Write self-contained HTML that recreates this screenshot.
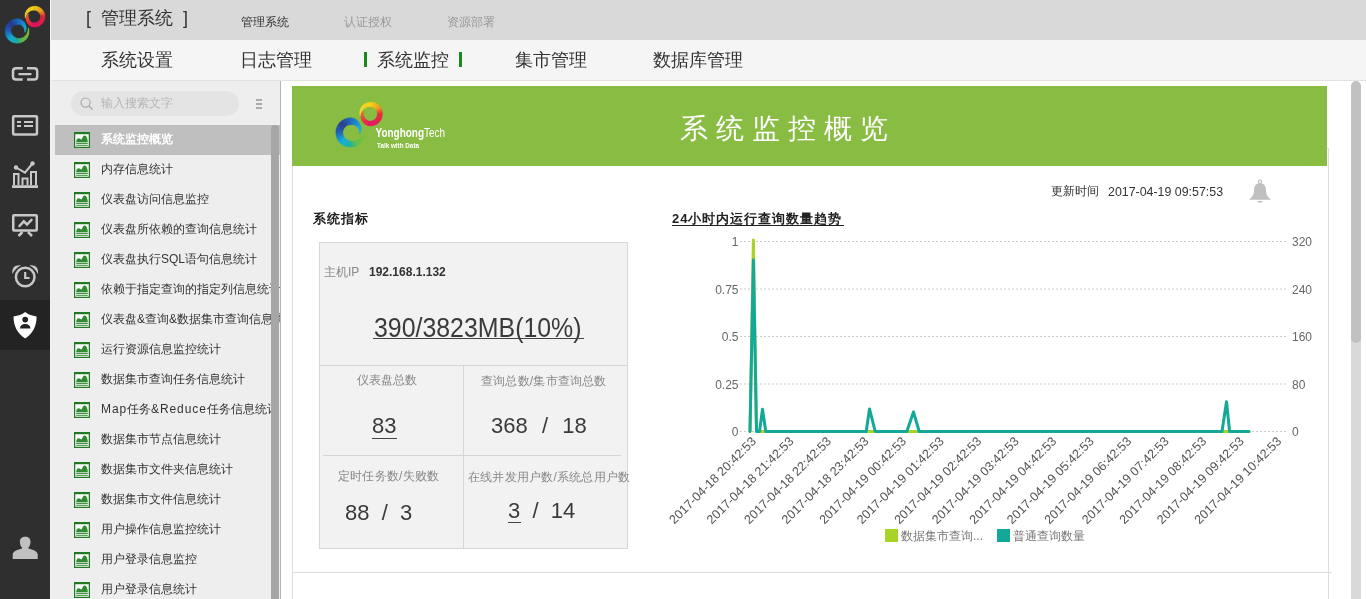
<!DOCTYPE html>
<html><head><meta charset="utf-8">
<style>
*{margin:0;padding:0;box-sizing:border-box}
html,body{width:1366px;height:599px;overflow:hidden;background:#fff;font-family:"Liberation Sans",sans-serif;color:#333}
.a{position:absolute;white-space:nowrap;line-height:1}
.b{position:absolute}
#side{position:absolute;left:0;top:0;width:50px;height:599px;background:#2f2f2f}
#sideline{position:absolute;left:50px;top:0;width:1px;height:599px;background:#f2f2f2}
#hdr{position:absolute;left:51px;top:0;width:1315px;height:40px;background:#d9d9d9}
#nav{position:absolute;left:51px;top:40px;width:1315px;height:41px;background:#f5f5f5;border-bottom:1px solid #e2e2e2}
#tree{position:absolute;left:51px;top:81px;width:229px;height:518px;background:#eeeeee;overflow:hidden}
#treeborder{position:absolute;left:280px;top:81px;width:1px;height:518px;background:#b4b4b4}
.row{position:absolute;left:4px;width:225px;height:30px;overflow:hidden}
.row.sel{background:#bfbfbf}
.row .t{position:absolute;left:46px;top:8px;font-size:12px;line-height:12px;color:#333;white-space:nowrap}
.row.sel .t{color:#fff;font-weight:bold}
.row svg{position:absolute;left:19px;top:7px}
#search{position:absolute;left:20px;top:10px;width:168px;height:25px;border-radius:13px;background:#e4e4e4}
.lbl{font-size:12px;color:#888}
.big{color:#3a3a3a}
svg text{font-family:"Liberation Sans",sans-serif}
#wrap{position:absolute;left:0;top:0;width:1366px;height:599px;will-change:transform}
</style></head><body><div id="wrap">
<svg width="0" height="0" style="position:absolute">
<defs>
<g id="ic">
<rect x="0.6" y="0.6" width="14.8" height="14.8" fill="#fafafa" stroke="#1f7a22" stroke-width="1.3"/>
<rect x="0" y="0" width="16" height="2.2" fill="#1f7a22"/>
<path d="M2.2,10.2 C2.2,7.5 3.5,6.2 4.6,6.2 C5.8,6.2 6.3,7.4 7.3,7.4 C8.4,7.4 8.6,3.6 10.5,3.6 C12.3,3.6 13.8,6.5 13.8,10.2 Z" fill="#2f8a32"/>
<rect x="2.2" y="10.9" width="11.6" height="0.9" fill="#1f7a22"/>
<rect x="2.2" y="12.8" width="11.6" height="0.9" fill="#1f7a22"/>
</g>
<g id="logo">
<path fill-rule="evenodd" fill="url(#gb)" d="M30,31 A12.5,12.5 0 1 1 5,31 A12.5,12.5 0 1 1 30,31 Z M25.6,30.4 A7.4,7.4 0 1 0 10.8,30.4 A7.4,7.4 0 1 0 25.6,30.4 Z"/>
<path fill-rule="evenodd" fill="url(#gr)" d="M45.1,16.6 A10.7,10.7 0 1 1 23.7,16.6 A10.7,10.7 0 1 1 45.1,16.6 Z M40.9,16.9 A6.3,6.3 0 1 0 28.3,16.9 A6.3,6.3 0 1 0 40.9,16.9 Z"/>
</g>
<linearGradient id="gb" x1="0" y1="0" x2="1" y2="1">
<stop offset="0" stop-color="#1b3f9a"/><stop offset="0.45" stop-color="#1aa8e0"/><stop offset="0.75" stop-color="#2fb8a0"/><stop offset="1" stop-color="#8cc63f"/>
</linearGradient>
<linearGradient id="gr" x1="0" y1="0" x2="0.6" y2="1">
<stop offset="0" stop-color="#ffd800"/><stop offset="0.5" stop-color="#f58a25"/><stop offset="1" stop-color="#e8104f"/>
</linearGradient>
</defs>
</svg>

<div id="side"></div>
<div id="sideline"></div>
<div id="hdr"></div>
<div id="nav"></div>
<div id="tree">
  <div id="search"></div>
  <svg class="b" style="left:29px;top:16px" width="14" height="14" viewBox="0 0 14 14"><circle cx="5.6" cy="5.6" r="4.6" fill="none" stroke="#aaa" stroke-width="1.2"/><path d="M8.9,8.9 L12.5,12.5" stroke="#aaa" stroke-width="1.4"/></svg>
  <div class="a" style="left:50px;top:16px;font-size:12px;color:#b5b5b5">输入搜索文字</div>
  <div class="b" style="left:205px;top:18px;width:6px;height:1.6px;background:#aaa"></div>
  <div class="b" style="left:205px;top:22px;width:6px;height:1.6px;background:#aaa"></div>
  <div class="b" style="left:205px;top:26px;width:6px;height:1.6px;background:#aaa"></div>
<div class="row sel" style="top:44px"><svg width="16" height="16" viewBox="0 0 16 16"><use href="#ic"/></svg><span class="t">系统监控概览</span></div>
<div class="row" style="top:74px"><svg width="16" height="16" viewBox="0 0 16 16"><use href="#ic"/></svg><span class="t">内存信息统计</span></div>
<div class="row" style="top:104px"><svg width="16" height="16" viewBox="0 0 16 16"><use href="#ic"/></svg><span class="t">仪表盘访问信息监控</span></div>
<div class="row" style="top:134px"><svg width="16" height="16" viewBox="0 0 16 16"><use href="#ic"/></svg><span class="t">仪表盘所依赖的查询信息统计</span></div>
<div class="row" style="top:164px"><svg width="16" height="16" viewBox="0 0 16 16"><use href="#ic"/></svg><span class="t">仪表盘执行SQL语句信息统计</span></div>
<div class="row" style="top:194px"><svg width="16" height="16" viewBox="0 0 16 16"><use href="#ic"/></svg><span class="t">依赖于指定查询的指定列信息统计</span></div>
<div class="row" style="top:224px"><svg width="16" height="16" viewBox="0 0 16 16"><use href="#ic"/></svg><span class="t">仪表盘&amp;查询&amp;数据集市查询信息统计</span></div>
<div class="row" style="top:254px"><svg width="16" height="16" viewBox="0 0 16 16"><use href="#ic"/></svg><span class="t">运行资源信息监控统计</span></div>
<div class="row" style="top:284px"><svg width="16" height="16" viewBox="0 0 16 16"><use href="#ic"/></svg><span class="t">数据集市查询任务信息统计</span></div>
<div class="row" style="top:314px"><svg width="16" height="16" viewBox="0 0 16 16"><use href="#ic"/></svg><span class="t"><span style="letter-spacing:0.9px">Map</span>任务<span style="letter-spacing:0.9px">&amp;Reduce</span>任务信息统计</span></div>
<div class="row" style="top:344px"><svg width="16" height="16" viewBox="0 0 16 16"><use href="#ic"/></svg><span class="t">数据集市节点信息统计</span></div>
<div class="row" style="top:374px"><svg width="16" height="16" viewBox="0 0 16 16"><use href="#ic"/></svg><span class="t">数据集市文件夹信息统计</span></div>
<div class="row" style="top:404px"><svg width="16" height="16" viewBox="0 0 16 16"><use href="#ic"/></svg><span class="t">数据集市文件信息统计</span></div>
<div class="row" style="top:434px"><svg width="16" height="16" viewBox="0 0 16 16"><use href="#ic"/></svg><span class="t">用户操作信息监控统计</span></div>
<div class="row" style="top:464px"><svg width="16" height="16" viewBox="0 0 16 16"><use href="#ic"/></svg><span class="t">用户登录信息监控</span></div>
<div class="row" style="top:494px"><svg width="16" height="16" viewBox="0 0 16 16"><use href="#ic"/></svg><span class="t">用户登录信息统计</span></div>
  <div class="b" style="left:220px;top:44px;width:8px;height:480px;background:#a6a6a6;border-radius:4px 4px 0 0"></div>
</div>
<div id="treeborder"></div>

<!-- sidebar icons -->
<svg class="b" style="left:0;top:0" width="50" height="599" viewBox="0 0 50 599">
<path d="M25.09,32.34L25.67,31.17L24.75,31.16L24.68,32.27Z" fill="#2db7b6" stroke="#2db7b6" stroke-width="0.35"/><path d="M25.67,31.17L26.06,29.87L24.64,30.05L24.75,31.16Z" fill="#26b5c2" stroke="#26b5c2" stroke-width="0.35"/><path d="M26.06,29.87L26.22,28.45L24.37,28.99L24.64,30.05Z" fill="#1fb3cf" stroke="#1fb3cf" stroke-width="0.35"/><path d="M26.22,28.45L26.15,26.95L23.94,27.98L24.37,28.99Z" fill="#18b2db" stroke="#18b2db" stroke-width="0.35"/><path d="M26.15,26.95L25.81,25.42L23.37,27.06L23.94,27.98Z" fill="#12afe6" stroke="#12afe6" stroke-width="0.35"/><path d="M25.81,25.42L25.21,23.91L22.67,26.24L23.37,27.06Z" fill="#13a5e1" stroke="#13a5e1" stroke-width="0.35"/><path d="M25.21,23.91L24.32,22.46L21.86,25.54L22.67,26.24Z" fill="#149bdc" stroke="#149bdc" stroke-width="0.35"/><path d="M24.32,22.46L23.16,21.13L20.96,24.96L21.86,25.54Z" fill="#1690d7" stroke="#1690d7" stroke-width="0.35"/><path d="M23.16,21.13L21.73,20.01L19.98,24.57L20.96,24.96Z" fill="#1786d2" stroke="#1786d2" stroke-width="0.35"/><path d="M21.73,20.01L20.06,19.25L18.92,24.49L19.98,24.57Z" fill="#187ccd" stroke="#187ccd" stroke-width="0.35"/><path d="M20.06,19.25L18.25,18.75L17.89,24.57L18.92,24.49Z" fill="#1972c9" stroke="#1972c9" stroke-width="0.35"/><path d="M18.25,18.75L16.37,18.77L16.91,24.57L17.89,24.57Z" fill="#1a67c3" stroke="#1a67c3" stroke-width="0.35"/><path d="M16.37,18.77L14.52,19.07L15.93,24.73L16.91,24.57Z" fill="#1d5eba" stroke="#1d5eba" stroke-width="0.35"/><path d="M14.52,19.07L12.73,19.65L14.99,25.03L15.93,24.73Z" fill="#2055b0" stroke="#2055b0" stroke-width="0.35"/><path d="M12.73,19.65L11.05,20.51L14.10,25.47L14.99,25.03Z" fill="#224ca6" stroke="#224ca6" stroke-width="0.35"/><path d="M11.05,20.51L9.51,21.60L13.29,26.05L14.10,25.47Z" fill="#25439c" stroke="#25439c" stroke-width="0.35"/><path d="M9.51,21.60L8.17,22.92L12.58,26.74L13.29,26.05Z" fill="#283a92" stroke="#283a92" stroke-width="0.35"/><path d="M8.17,22.92L7.03,24.44L11.98,27.54L12.58,26.74Z" fill="#26419a" stroke="#26419a" stroke-width="0.35"/><path d="M7.03,24.44L6.14,26.11L11.50,28.41L11.98,27.54Z" fill="#2447a1" stroke="#2447a1" stroke-width="0.35"/><path d="M6.14,26.11L5.52,27.89L11.17,29.36L11.50,28.41Z" fill="#234ea9" stroke="#234ea9" stroke-width="0.35"/><path d="M5.52,27.89L5.17,29.75L10.98,30.34L11.17,29.36Z" fill="#2155b0" stroke="#2155b0" stroke-width="0.35"/><path d="M5.17,29.75L5.12,31.65L10.94,31.34L10.98,30.34Z" fill="#1f5cb8" stroke="#1f5cb8" stroke-width="0.35"/><path d="M5.12,31.65L5.35,33.53L11.06,32.34L10.94,31.34Z" fill="#1c6bc0" stroke="#1c6bc0" stroke-width="0.35"/><path d="M5.35,33.53L5.87,35.36L11.33,33.31L11.06,32.34Z" fill="#197bc8" stroke="#197bc8" stroke-width="0.35"/><path d="M5.87,35.36L6.66,37.09L11.74,34.23L11.33,33.31Z" fill="#178bd1" stroke="#178bd1" stroke-width="0.35"/><path d="M6.66,37.09L7.71,38.68L12.30,35.08L11.74,34.23Z" fill="#149bd9" stroke="#149bd9" stroke-width="0.35"/><path d="M7.71,38.68L8.98,40.09L12.97,35.83L12.30,35.08Z" fill="#11abe1" stroke="#11abe1" stroke-width="0.35"/><path d="M8.98,40.09L10.46,41.29L13.76,36.48L12.97,35.83Z" fill="#12b0db" stroke="#12b0db" stroke-width="0.35"/><path d="M10.46,41.29L12.13,42.20L14.60,37.05L13.76,36.48Z" fill="#15b0cd" stroke="#15b0cd" stroke-width="0.35"/><path d="M12.13,42.20L13.94,42.77L15.52,37.56L14.60,37.05Z" fill="#18b0bf" stroke="#18b0bf" stroke-width="0.35"/><path d="M13.94,42.77L15.79,43.06L16.52,37.96L15.52,37.56Z" fill="#1bb0b1" stroke="#1bb0b1" stroke-width="0.35"/><path d="M15.79,43.06L17.65,43.16L17.59,38.29L16.52,37.96Z" fill="#1eb0a3" stroke="#1eb0a3" stroke-width="0.35"/><path d="M17.65,43.16L19.50,42.97L18.75,38.45L17.59,38.29Z" fill="#2fb38c" stroke="#2fb38c" stroke-width="0.35"/><path d="M19.50,42.97L21.30,42.51L19.95,38.42L18.75,38.45Z" fill="#42b775" stroke="#42b775" stroke-width="0.35"/><path d="M21.30,42.51L23.00,41.77L21.17,38.20L19.95,38.42Z" fill="#55bb5d" stroke="#55bb5d" stroke-width="0.35"/><path d="M23.00,41.77L24.57,40.79L22.38,37.76L21.17,38.20Z" fill="#63be4b" stroke="#63be4b" stroke-width="0.35"/><path d="M24.57,40.79L25.96,39.58L23.54,37.13L22.38,37.76Z" fill="#68be4a" stroke="#68be4a" stroke-width="0.35"/><path d="M25.96,39.58L27.11,38.15L24.65,36.32L23.54,37.13Z" fill="#6cbf48" stroke="#6cbf48" stroke-width="0.35"/><path d="M27.11,38.15L28.00,36.55L25.68,35.32L24.65,36.32Z" fill="#71bf46" stroke="#71bf46" stroke-width="0.35"/><path d="M28.00,36.55L28.63,34.85L26.57,34.14L25.68,35.32Z" fill="#76bf44" stroke="#76bf44" stroke-width="0.35"/><path d="M28.63,34.85L28.99,33.09L27.27,32.78L26.57,34.14Z" fill="#7ac042" stroke="#7ac042" stroke-width="0.35"/><path d="M28.99,33.09L29.07,31.31L27.77,31.28L27.27,32.78Z" fill="#7fc041" stroke="#7fc041" stroke-width="0.35"/><path d="M29.07,31.31L28.88,29.56L28.03,29.66L27.77,31.28Z" fill="#82c140" stroke="#82c140" stroke-width="0.35"/><path d="M28.88,29.56L28.43,27.86L28.03,27.98L28.03,29.66Z" fill="#85c240" stroke="#85c240" stroke-width="0.35"/><path d="M25.24,17.89L25.01,16.45L25.86,16.46L25.67,17.83Z" fill="#f2dc38" stroke="#f2dc38" stroke-width="0.35"/><path d="M25.01,16.45L25.02,14.97L26.26,15.18L25.86,16.46Z" fill="#f3db35" stroke="#f3db35" stroke-width="0.35"/><path d="M25.02,14.97L25.25,13.49L26.84,14.03L26.26,15.18Z" fill="#f4da32" stroke="#f4da32" stroke-width="0.35"/><path d="M25.25,13.49L25.73,12.04L27.57,13.01L26.84,14.03Z" fill="#f4d92f" stroke="#f4d92f" stroke-width="0.35"/><path d="M25.73,12.04L26.43,10.67L28.44,12.16L27.57,13.01Z" fill="#f5d92b" stroke="#f5d92b" stroke-width="0.35"/><path d="M26.43,10.67L27.35,9.41L29.39,11.49L28.44,12.16Z" fill="#f6d828" stroke="#f6d828" stroke-width="0.35"/><path d="M27.35,9.41L28.50,8.33L30.38,10.96L29.39,11.49Z" fill="#f6d725" stroke="#f6d725" stroke-width="0.35"/><path d="M28.50,8.33L29.85,7.49L31.38,10.55L30.38,10.96Z" fill="#f7d721" stroke="#f7d721" stroke-width="0.35"/><path d="M29.85,7.49L31.31,6.86L32.40,10.29L31.38,10.55Z" fill="#f7d61e" stroke="#f7d61e" stroke-width="0.35"/><path d="M31.31,6.86L32.84,6.41L33.42,10.15L32.40,10.29Z" fill="#f8d51b" stroke="#f8d51b" stroke-width="0.35"/><path d="M32.84,6.41L34.45,6.20L34.43,10.18L33.42,10.15Z" fill="#f9d418" stroke="#f9d418" stroke-width="0.35"/><path d="M34.45,6.20L36.07,6.25L35.41,10.35L34.43,10.18Z" fill="#f9cf17" stroke="#f9cf17" stroke-width="0.35"/><path d="M36.07,6.25L37.69,6.55L36.34,10.68L35.41,10.35Z" fill="#f8c619" stroke="#f8c619" stroke-width="0.35"/><path d="M37.69,6.55L39.22,7.16L37.22,11.07L36.34,10.68Z" fill="#f7bd1b" stroke="#f7bd1b" stroke-width="0.35"/><path d="M39.22,7.16L40.62,8.03L38.04,11.58L37.22,11.07Z" fill="#f7b41d" stroke="#f7b41d" stroke-width="0.35"/><path d="M40.62,8.03L41.87,9.10L38.78,12.21L38.04,11.58Z" fill="#f6ab1f" stroke="#f6ab1f" stroke-width="0.35"/><path d="M41.87,9.10L42.94,10.36L39.40,12.94L38.78,12.21Z" fill="#f5a221" stroke="#f5a221" stroke-width="0.35"/><path d="M42.94,10.36L43.81,11.76L39.91,13.77L39.40,12.94Z" fill="#f38a25" stroke="#f38a25" stroke-width="0.35"/><path d="M43.81,11.76L44.44,13.28L40.28,14.66L39.91,13.77Z" fill="#f06f2b" stroke="#f06f2b" stroke-width="0.35"/><path d="M44.44,13.28L44.83,14.88L40.50,15.59L40.28,14.66Z" fill="#ed5331" stroke="#ed5331" stroke-width="0.35"/><path d="M44.83,14.88L44.97,16.52L40.58,16.55L40.50,15.59Z" fill="#ea3736" stroke="#ea3736" stroke-width="0.35"/><path d="M44.97,16.52L44.85,18.16L40.51,17.51L40.58,16.55Z" fill="#e8253c" stroke="#e8253c" stroke-width="0.35"/><path d="M44.85,18.16L44.48,19.76L40.29,18.45L40.51,17.51Z" fill="#e82341" stroke="#e82341" stroke-width="0.35"/><path d="M44.48,19.76L43.86,21.29L39.93,19.34L40.29,18.45Z" fill="#e82145" stroke="#e82145" stroke-width="0.35"/><path d="M43.86,21.29L43.01,22.70L39.43,20.16L39.93,19.34Z" fill="#e81f4a" stroke="#e81f4a" stroke-width="0.35"/><path d="M43.01,22.70L41.96,23.96L38.82,20.90L39.43,20.16Z" fill="#e81c4f" stroke="#e81c4f" stroke-width="0.35"/><path d="M41.96,23.96L40.72,25.04L38.09,21.53L38.82,20.90Z" fill="#e81a54" stroke="#e81a54" stroke-width="0.35"/><path d="M40.72,25.04L39.33,25.92L37.28,22.04L38.09,21.53Z" fill="#e81858" stroke="#e81858" stroke-width="0.35"/><path d="M39.33,25.92L37.83,26.57L36.40,22.42L37.28,22.04Z" fill="#e8165d" stroke="#e8165d" stroke-width="0.35"/><path d="M37.83,26.57L36.24,26.97L35.47,22.66L36.40,22.42Z" fill="#e81462" stroke="#e81462" stroke-width="0.35"/><path d="M36.24,26.97L34.60,27.11L34.52,22.76L35.47,22.66Z" fill="#e81266" stroke="#e81266" stroke-width="0.35"/><path d="M34.60,27.11L32.98,26.93L33.55,22.78L34.52,22.76Z" fill="#e81268" stroke="#e81268" stroke-width="0.35"/><path d="M32.98,26.93L31.42,26.50L32.58,22.65L33.55,22.78Z" fill="#e8185f" stroke="#e8185f" stroke-width="0.35"/><path d="M31.42,26.50L30.02,25.71L31.69,22.24L32.58,22.65Z" fill="#e81f56" stroke="#e81f56" stroke-width="0.35"/><path d="M30.02,25.71L28.79,24.73L30.89,21.69L31.69,22.24Z" fill="#e8264e" stroke="#e8264e" stroke-width="0.35"/><path d="M28.79,24.73L27.76,23.59L30.19,21.03L30.89,21.69Z" fill="#e82c45" stroke="#e82c45" stroke-width="0.35"/><path d="M27.76,23.59L26.94,22.33L29.60,20.28L30.19,21.03Z" fill="#e9343f" stroke="#e9343f" stroke-width="0.35"/><path d="M26.94,22.33L26.35,20.99L29.15,19.46L29.60,20.28Z" fill="#ea3d3c" stroke="#ea3d3c" stroke-width="0.35"/><path d="M26.35,20.99L26.03,19.59L28.79,18.60L29.15,19.46Z" fill="#ec4639" stroke="#ec4639" stroke-width="0.35"/><path d="M26.03,19.59L26.06,18.18L28.45,17.73L28.79,18.60Z" fill="#ed4f36" stroke="#ed4f36" stroke-width="0.35"/><path d="M26.06,18.18L26.32,16.85L28.25,16.79L28.45,17.73Z" fill="#ef5833" stroke="#ef5833" stroke-width="0.35"/><path d="M26.32,16.85L26.77,15.65L28.20,15.82L28.25,16.79Z" fill="#f06130" stroke="#f06130" stroke-width="0.35"/><path d="M26.77,15.65L27.40,14.58L28.30,14.84L28.20,15.82Z" fill="#f16b2d" stroke="#f16b2d" stroke-width="0.35"/><path d="M27.40,14.58L28.16,13.69L28.56,13.88L28.30,14.84Z" fill="#f2752b" stroke="#f2752b" stroke-width="0.35"/>
  <g stroke="#c8c8c8" stroke-width="2.5" fill="none" stroke-linecap="butt">
    <path d="M22.7,68.2 H16 Q13,68.2 13,71.2 V76.5 Q13,79.5 16,79.5 H22.7"/>
    <path d="M27,68.2 H34.2 Q37.2,68.2 37.2,71.2 V76.5 Q37.2,79.5 34.2,79.5 H27"/>
    <path d="M19.3,74.1 H30.6" stroke-linecap="round" stroke-width="2.2"/>
    <rect x="13.15" y="116.15" width="23.8" height="18.4" rx="1"/>
  </g>
  <g stroke="#c8c8c8" stroke-width="2" fill="none">
    <path d="M17,122 H21 M24,122 H33 M17,126 H21 M24,126 H33"/>
  </g>
  <g fill="#c8c8c8">
    <rect x="12" y="185.2" width="26" height="2.8"/>
  </g>
  <g stroke="#c8c8c8" stroke-width="2" fill="none">
    <path d="M14,185 V174 H18.5 V185"/>
    <path d="M22.5,185 V178.5 H27.5 V185"/>
    <path d="M31,185 V172 H36 V185"/>
    <path d="M16,167.5 L25,172.7 L32.5,163.5"/>
  </g>
  <g fill="#c8c8c8"><circle cx="16" cy="167.5" r="2.2"/><circle cx="32.5" cy="163.5" r="2.2"/></g>
  <g stroke="#c8c8c8" stroke-width="2.5" fill="none">
    <rect x="13.25" y="215.15" width="23.5" height="15.3" rx="0.8"/>
    <path d="M19.5,226 L23.8,221.3 L27,224.5 L31.5,219.8" stroke-linecap="round"/>
    <path d="M18.5,236 L22.5,232 M28,232 L32,236"/>
    <circle cx="25.2" cy="277" r="9.3"/>
  </g>
  <g stroke="#c8c8c8" stroke-width="2.2" fill="none"><path d="M25.2,272 V278 H29.5"/></g>
  <g fill="#c8c8c8">
    <path d="M12.5,274 C11.5,268 15,264.5 21,265.5 C17,267.5 14.5,270 12.5,274 Z"/>
    <path d="M37.9,274 C38.9,268 35.4,264.5 29.4,265.5 C33.4,267.5 35.9,270 37.9,274 Z"/>
  </g>
  <rect x="0" y="300" width="50" height="50" fill="#232323"/>
  <path d="M25.2,312 C28.5,314.5 32,315.8 36.6,316.5 C36.6,326 33,333.5 25.2,338.5 C17.4,333.5 13.5,326 13.5,316.5 C18.4,315.8 21.9,314.5 25.2,312 Z" fill="#fff"/>
  <circle cx="25.2" cy="319.6" r="2.9" fill="#232323"/>
  <path d="M20,328.5 C20,325.5 22,324 25.2,324 C28.4,324 30.4,325.5 30.4,328.5 Z" fill="#232323"/>
  <g fill="#c0c0c0">
    <path d="M19.9,541.8 C19.9,538.2 22,536.7 25.2,536.7 C28.4,536.7 30.5,538.2 30.5,541.8 C30.5,544.8 29.4,546.6 28.4,547.6 L28.4,548.6 C33,549.8 36.8,551.2 37.7,554 L37.7,559 L12.7,559 L12.7,554 C13.6,551.2 17.4,549.8 22,548.6 L22,547.6 C21,546.6 19.9,544.8 19.9,541.8 Z"/>
  </g>
</svg>

<!-- header text -->
<div class="a" style="left:86px;top:9px;font-size:18px;color:#333">[</div>
<div class="a" style="left:101px;top:9px;font-size:18px;color:#333">管理系统</div>
<div class="a" style="left:183px;top:9px;font-size:18px;color:#333">]</div>
<div class="a" style="left:241px;top:16px;font-size:12px;color:#333">管理系统</div>
<div class="a" style="left:344px;top:16px;font-size:12px;color:#999">认证授权</div>
<div class="a" style="left:447px;top:16px;font-size:12px;color:#999">资源部署</div>

<!-- nav -->
<div class="a" style="left:101px;top:51px;font-size:18px;color:#333">系统设置</div>
<div class="a" style="left:240px;top:51px;font-size:18px;color:#333">日志管理</div>
<div class="b" style="left:364px;top:52px;width:3px;height:15px;background:#1a8a1a"></div>
<div class="a" style="left:377px;top:51px;font-size:18px;color:#333">系统监控</div>
<div class="b" style="left:459px;top:52px;width:3px;height:15px;background:#1a8a1a"></div>
<div class="a" style="left:515px;top:51px;font-size:18px;color:#333">集市管理</div>
<div class="a" style="left:653px;top:51px;font-size:18px;color:#333">数据库管理</div>

<!-- content borders -->
<div class="b" style="left:292px;top:148px;width:1037px;height:451px;border:1px solid #dcdcdc;border-bottom:0"></div>
<div class="b" style="left:292px;top:572px;width:1040px;height:1px;background:#dcdcdc"></div>

<!-- banner -->
<div class="b" style="left:292px;top:86px;width:1035px;height:80px;background:#88bc43"></div>
<svg class="b" style="left:330px;top:95px" width="120" height="60" viewBox="0 0 120 60">
<path d="M29.81,39.11L30.50,37.71L29.39,37.69L29.32,39.02Z" fill="#2db7b6" stroke="#2db7b6" stroke-width="0.35"/><path d="M30.50,37.71L30.97,36.14L29.27,36.36L29.39,37.69Z" fill="#26b5c2" stroke="#26b5c2" stroke-width="0.35"/><path d="M30.97,36.14L31.17,34.43L28.94,35.09L29.27,36.36Z" fill="#1fb3cf" stroke="#1fb3cf" stroke-width="0.35"/><path d="M31.17,34.43L31.08,32.64L28.43,33.88L28.94,35.09Z" fill="#18b2db" stroke="#18b2db" stroke-width="0.35"/><path d="M31.08,32.64L30.68,30.80L27.75,32.77L28.43,33.88Z" fill="#12afe6" stroke="#12afe6" stroke-width="0.35"/><path d="M30.68,30.80L29.95,28.99L26.90,31.79L27.75,32.77Z" fill="#13a5e1" stroke="#13a5e1" stroke-width="0.35"/><path d="M29.95,28.99L28.88,27.25L25.93,30.95L26.90,31.79Z" fill="#149bdc" stroke="#149bdc" stroke-width="0.35"/><path d="M28.88,27.25L27.49,25.66L24.85,30.25L25.93,30.95Z" fill="#1690d7" stroke="#1690d7" stroke-width="0.35"/><path d="M27.49,25.66L25.78,24.31L23.67,29.78L24.85,30.25Z" fill="#1786d2" stroke="#1786d2" stroke-width="0.35"/><path d="M25.78,24.31L23.77,23.40L22.40,29.68L23.67,29.78Z" fill="#187ccd" stroke="#187ccd" stroke-width="0.35"/><path d="M23.77,23.40L21.60,22.80L21.17,29.78L22.40,29.68Z" fill="#1972c9" stroke="#1972c9" stroke-width="0.35"/><path d="M21.60,22.80L19.35,22.82L19.99,29.79L21.17,29.78Z" fill="#1a67c3" stroke="#1a67c3" stroke-width="0.35"/><path d="M19.35,22.82L17.12,23.18L18.82,29.97L19.99,29.79Z" fill="#1d5eba" stroke="#1d5eba" stroke-width="0.35"/><path d="M17.12,23.18L14.97,23.89L17.69,30.34L18.82,29.97Z" fill="#2055b0" stroke="#2055b0" stroke-width="0.35"/><path d="M14.97,23.89L12.96,24.91L16.62,30.87L17.69,30.34Z" fill="#224ca6" stroke="#224ca6" stroke-width="0.35"/><path d="M12.96,24.91L11.12,26.22L15.65,31.56L16.62,30.87Z" fill="#25439c" stroke="#25439c" stroke-width="0.35"/><path d="M11.12,26.22L9.50,27.81L14.79,32.39L15.65,31.56Z" fill="#283a92" stroke="#283a92" stroke-width="0.35"/><path d="M9.50,27.81L8.14,29.62L14.07,33.34L14.79,32.39Z" fill="#26419a" stroke="#26419a" stroke-width="0.35"/><path d="M8.14,29.62L7.07,31.63L13.50,34.40L14.07,33.34Z" fill="#2447a1" stroke="#2447a1" stroke-width="0.35"/><path d="M7.07,31.63L6.32,33.77L13.10,35.53L13.50,34.40Z" fill="#234ea9" stroke="#234ea9" stroke-width="0.35"/><path d="M6.32,33.77L5.91,36.00L12.87,36.71L13.10,35.53Z" fill="#2155b0" stroke="#2155b0" stroke-width="0.35"/><path d="M5.91,36.00L5.84,38.28L12.83,37.91L12.87,36.71Z" fill="#1f5cb8" stroke="#1f5cb8" stroke-width="0.35"/><path d="M5.84,38.28L6.12,40.54L12.97,39.11L12.83,37.91Z" fill="#1c6bc0" stroke="#1c6bc0" stroke-width="0.35"/><path d="M6.12,40.54L6.74,42.73L13.30,40.28L12.97,39.11Z" fill="#197bc8" stroke="#197bc8" stroke-width="0.35"/><path d="M6.74,42.73L7.69,44.81L13.79,41.38L13.30,40.28Z" fill="#178bd1" stroke="#178bd1" stroke-width="0.35"/><path d="M7.69,44.81L8.95,46.71L14.46,42.39L13.79,41.38Z" fill="#149bd9" stroke="#149bd9" stroke-width="0.35"/><path d="M8.95,46.71L10.48,48.41L15.27,43.30L14.46,42.39Z" fill="#11abe1" stroke="#11abe1" stroke-width="0.35"/><path d="M10.48,48.41L12.25,49.85L16.21,44.07L15.27,43.30Z" fill="#12b0db" stroke="#12b0db" stroke-width="0.35"/><path d="M12.25,49.85L14.26,50.94L17.23,44.75L16.21,44.07Z" fill="#15b0cd" stroke="#15b0cd" stroke-width="0.35"/><path d="M14.26,50.94L16.43,51.62L18.32,45.38L17.23,44.75Z" fill="#18b0bf" stroke="#18b0bf" stroke-width="0.35"/><path d="M16.43,51.62L18.65,51.98L19.52,45.85L18.32,45.38Z" fill="#1bb0b1" stroke="#1bb0b1" stroke-width="0.35"/><path d="M18.65,51.98L20.89,52.09L20.81,46.25L19.52,45.85Z" fill="#1eb0a3" stroke="#1eb0a3" stroke-width="0.35"/><path d="M20.89,52.09L23.10,51.87L22.20,46.44L20.81,46.25Z" fill="#2fb38c" stroke="#2fb38c" stroke-width="0.35"/><path d="M23.10,51.87L25.26,51.31L23.64,46.41L22.20,46.44Z" fill="#42b775" stroke="#42b775" stroke-width="0.35"/><path d="M25.26,51.31L27.30,50.43L25.11,46.14L23.64,46.41Z" fill="#55bb5d" stroke="#55bb5d" stroke-width="0.35"/><path d="M27.30,50.43L29.18,49.25L26.56,45.62L25.11,46.14Z" fill="#63be4b" stroke="#63be4b" stroke-width="0.35"/><path d="M29.18,49.25L30.85,47.80L27.95,44.85L26.56,45.62Z" fill="#68be4a" stroke="#68be4a" stroke-width="0.35"/><path d="M30.85,47.80L32.24,46.08L29.28,43.88L27.95,44.85Z" fill="#6cbf48" stroke="#6cbf48" stroke-width="0.35"/><path d="M32.24,46.08L33.30,44.16L30.52,42.69L29.28,43.88Z" fill="#71bf46" stroke="#71bf46" stroke-width="0.35"/><path d="M33.30,44.16L34.06,42.12L31.58,41.27L30.52,42.69Z" fill="#76bf44" stroke="#76bf44" stroke-width="0.35"/><path d="M34.06,42.12L34.49,40.01L32.43,39.64L31.58,41.27Z" fill="#7ac042" stroke="#7ac042" stroke-width="0.35"/><path d="M34.49,40.01L34.59,37.87L33.03,37.83L32.43,39.64Z" fill="#7fc041" stroke="#7fc041" stroke-width="0.35"/><path d="M34.59,37.87L34.36,35.77L33.34,35.90L33.03,37.83Z" fill="#82c140" stroke="#82c140" stroke-width="0.35"/><path d="M34.36,35.77L33.82,33.74L33.34,33.88L33.34,35.90Z" fill="#85c240" stroke="#85c240" stroke-width="0.35"/><path d="M29.95,20.47L29.70,18.83L30.67,18.84L30.45,20.40Z" fill="#f2dc38" stroke="#f2dc38" stroke-width="0.35"/><path d="M29.70,18.83L29.70,17.14L31.12,17.39L30.67,18.84Z" fill="#f3db35" stroke="#f3db35" stroke-width="0.35"/><path d="M29.70,17.14L29.97,15.45L31.78,16.07L31.12,17.39Z" fill="#f4da32" stroke="#f4da32" stroke-width="0.35"/><path d="M29.97,15.45L30.51,13.80L32.62,14.91L31.78,16.07Z" fill="#f4d92f" stroke="#f4d92f" stroke-width="0.35"/><path d="M30.51,13.80L31.31,12.24L33.60,13.94L32.62,14.91Z" fill="#f5d92b" stroke="#f5d92b" stroke-width="0.35"/><path d="M31.31,12.24L32.37,10.80L34.69,13.17L33.60,13.94Z" fill="#f6d828" stroke="#f6d828" stroke-width="0.35"/><path d="M32.37,10.80L33.68,9.57L35.81,12.57L34.69,13.17Z" fill="#f6d725" stroke="#f6d725" stroke-width="0.35"/><path d="M33.68,9.57L35.21,8.61L36.95,12.10L35.81,12.57Z" fill="#f7d721" stroke="#f7d721" stroke-width="0.35"/><path d="M35.21,8.61L36.87,7.89L38.12,11.81L36.95,12.10Z" fill="#f7d61e" stroke="#f7d61e" stroke-width="0.35"/><path d="M36.87,7.89L38.63,7.38L39.28,11.65L38.12,11.81Z" fill="#f8d51b" stroke="#f8d51b" stroke-width="0.35"/><path d="M38.63,7.38L40.45,7.14L40.43,11.68L39.28,11.65Z" fill="#f9d418" stroke="#f9d418" stroke-width="0.35"/><path d="M40.45,7.14L42.31,7.19L41.55,11.88L40.43,11.68Z" fill="#f9cf17" stroke="#f9cf17" stroke-width="0.35"/><path d="M42.31,7.19L44.15,7.54L42.61,12.25L41.55,11.88Z" fill="#f8c619" stroke="#f8c619" stroke-width="0.35"/><path d="M44.15,7.54L45.89,8.24L43.62,12.70L42.61,12.25Z" fill="#f7bd1b" stroke="#f7bd1b" stroke-width="0.35"/><path d="M45.89,8.24L47.49,9.23L44.56,13.28L43.62,12.70Z" fill="#f7b41d" stroke="#f7b41d" stroke-width="0.35"/><path d="M47.49,9.23L48.92,10.45L45.39,13.99L44.56,13.28Z" fill="#f6ab1f" stroke="#f6ab1f" stroke-width="0.35"/><path d="M48.92,10.45L50.14,11.88L46.11,14.83L45.39,13.99Z" fill="#f5a221" stroke="#f5a221" stroke-width="0.35"/><path d="M50.14,11.88L51.13,13.48L46.68,15.77L46.11,14.83Z" fill="#f38a25" stroke="#f38a25" stroke-width="0.35"/><path d="M51.13,13.48L51.85,15.21L47.10,16.78L46.68,15.77Z" fill="#f06f2b" stroke="#f06f2b" stroke-width="0.35"/><path d="M51.85,15.21L52.29,17.04L47.36,17.85L47.10,16.78Z" fill="#ed5331" stroke="#ed5331" stroke-width="0.35"/><path d="M52.29,17.04L52.45,18.91L47.45,18.95L47.36,17.85Z" fill="#ea3736" stroke="#ea3736" stroke-width="0.35"/><path d="M52.45,18.91L52.31,20.78L47.37,20.04L47.45,18.95Z" fill="#e8253c" stroke="#e8253c" stroke-width="0.35"/><path d="M52.31,20.78L51.89,22.61L47.12,21.11L47.37,20.04Z" fill="#e82341" stroke="#e82341" stroke-width="0.35"/><path d="M51.89,22.61L51.19,24.35L46.71,22.12L47.12,21.11Z" fill="#e82145" stroke="#e82145" stroke-width="0.35"/><path d="M51.19,24.35L50.22,25.95L46.14,23.06L46.71,22.12Z" fill="#e81f4a" stroke="#e81f4a" stroke-width="0.35"/><path d="M50.22,25.95L49.02,27.39L45.44,23.90L46.14,23.06Z" fill="#e81c4f" stroke="#e81c4f" stroke-width="0.35"/><path d="M49.02,27.39L47.61,28.62L44.61,24.62L45.44,23.90Z" fill="#e81a54" stroke="#e81a54" stroke-width="0.35"/><path d="M47.61,28.62L46.03,29.62L43.69,25.20L44.61,24.62Z" fill="#e81858" stroke="#e81858" stroke-width="0.35"/><path d="M46.03,29.62L44.31,30.36L42.68,25.64L43.69,25.20Z" fill="#e8165d" stroke="#e8165d" stroke-width="0.35"/><path d="M44.31,30.36L42.50,30.83L41.62,25.90L42.68,25.64Z" fill="#e81462" stroke="#e81462" stroke-width="0.35"/><path d="M42.50,30.83L40.63,30.99L40.54,26.03L41.62,25.90Z" fill="#e81266" stroke="#e81266" stroke-width="0.35"/><path d="M40.63,30.99L38.78,30.78L39.43,26.05L40.54,26.03Z" fill="#e81268" stroke="#e81268" stroke-width="0.35"/><path d="M38.78,30.78L37.00,30.29L38.32,25.90L39.43,26.05Z" fill="#e8185f" stroke="#e8185f" stroke-width="0.35"/><path d="M37.00,30.29L35.41,29.39L37.31,25.43L38.32,25.90Z" fill="#e81f56" stroke="#e81f56" stroke-width="0.35"/><path d="M35.41,29.39L34.01,28.26L36.39,24.80L37.31,25.43Z" fill="#e8264e" stroke="#e8264e" stroke-width="0.35"/><path d="M34.01,28.26L32.83,26.97L35.60,24.06L36.39,24.80Z" fill="#e82c45" stroke="#e82c45" stroke-width="0.35"/><path d="M32.83,26.97L31.90,25.53L34.93,23.20L35.60,24.06Z" fill="#e9343f" stroke="#e9343f" stroke-width="0.35"/><path d="M31.90,25.53L31.22,24.00L34.41,22.26L34.93,23.20Z" fill="#ea3d3c" stroke="#ea3d3c" stroke-width="0.35"/><path d="M31.22,24.00L30.86,22.41L34.00,21.29L34.41,22.26Z" fill="#ec4639" stroke="#ec4639" stroke-width="0.35"/><path d="M30.86,22.41L30.89,20.80L33.62,20.29L34.00,21.29Z" fill="#ed4f36" stroke="#ed4f36" stroke-width="0.35"/><path d="M30.89,20.80L31.18,19.29L33.39,19.22L33.62,20.29Z" fill="#ef5833" stroke="#ef5833" stroke-width="0.35"/><path d="M31.18,19.29L31.70,17.91L33.33,18.11L33.39,19.22Z" fill="#f06130" stroke="#f06130" stroke-width="0.35"/><path d="M31.70,17.91L32.42,16.70L33.44,17.00L33.33,18.11Z" fill="#f16b2d" stroke="#f16b2d" stroke-width="0.35"/><path d="M32.42,16.70L33.29,15.68L33.74,15.89L33.44,17.00Z" fill="#f2752b" stroke="#f2752b" stroke-width="0.35"/>
  <text x="45.5" y="42" font-size="12.5" font-weight="bold" fill="#fff" textLength="69.5" lengthAdjust="spacingAndGlyphs">Yonghong<tspan font-weight="normal">Tech</tspan></text>
  <text x="47" y="53" font-size="7.5" font-weight="bold" fill="#fff" textLength="42" lengthAdjust="spacingAndGlyphs">Talk with Data</text>
</svg>
<div class="a" style="left:680px;top:115px;font-size:28px;color:#fff;letter-spacing:8px">系统监控概览</div>

<!-- time & bell -->
<div class="a" style="left:1051px;top:185px;font-size:12px;color:#333">更新时间</div>
<div class="a" style="left:1108px;top:186px;font-size:12.4px;color:#333">2017-04-19 09:57:53</div>
<svg class="b" style="left:1248px;top:179px" width="24" height="26" viewBox="0 0 24 26">
  <circle cx="12" cy="2.7" r="1.7" fill="none" stroke="#c0c0c0" stroke-width="1.2"/>
  <path d="M12,4.2 C7.3,4.2 6,7.8 6,11.8 C6,15.8 4.2,18.2 1,20.8 L23,20.8 C19.8,18.2 18,15.8 18,11.8 C18,7.8 16.7,4.2 12,4.2 Z" fill="#c0c0c0"/>
  <path d="M8.8,22 Q12,25.5 15.2,22 Z" fill="#c0c0c0"/>
</svg>

<!-- system indicators -->
<div class="a" style="left:313px;top:212px;font-size:13px;letter-spacing:1px;font-weight:bold;color:#222">系统指标</div>
<div class="b" style="left:319px;top:242px;width:309px;height:307px;background:#f2f2f2;border:1px solid #d6d6d6"></div>
<div class="b" style="left:320px;top:365px;width:307px;height:1px;background:#d6d6d6"></div>
<div class="b" style="left:463px;top:366px;width:1px;height:182px;background:#d6d6d6"></div>
<div class="b" style="left:323px;top:455px;width:298px;height:1px;background:#d6d6d6"></div>
<div class="a lbl" style="left:324px;top:266px">主机IP</div>
<div class="a" style="left:369px;top:266px;font-size:12px;font-weight:bold;color:#333">192.168.1.132</div>
<div class="a big" style="left:374px;top:314px;font-size:27.5px;transform:scaleX(0.905);transform-origin:0 0">390/3823MB(10%)</div><div class="b" style="left:373px;top:338px;width:211px;height:1px;background:#444"></div>
<div class="a lbl" style="left:357px;top:374px">仪表盘总数</div>
<div class="a lbl" style="left:481px;top:375px;letter-spacing:0.2px">查询总数/集市查询总数</div>
<div class="a big" style="left:372px;top:415px;font-size:22px">83</div><div class="b" style="left:372px;top:438px;width:25px;height:1px;background:#444"></div>
<div class="a big" style="left:491px;top:415px;font-size:22px;white-space:pre;word-spacing:1px">368  /  18</div>
<div class="a lbl" style="left:338px;top:470px;letter-spacing:0.2px">定时任务数/失败数</div>
<div class="a lbl" style="left:468px;top:471px;letter-spacing:0.2px">在线并发用户数/系统总用户数</div>
<div class="a big" style="left:345px;top:502px;font-size:22px;white-space:pre">88  /  3</div>
<div class="a big" style="left:508px;top:500px;font-size:22px;white-space:pre">3  /  14</div><div class="b" style="left:508px;top:522px;width:13px;height:1px;background:#444"></div>

<!-- chart -->
<div class="a" style="left:672px;top:212px;font-size:13px;letter-spacing:1px;font-weight:bold;color:#222">24小时内运行查询数量趋势</div><div class="b" style="left:672px;top:225px;width:172px;height:1px;background:#222"></div>
<svg class="b" style="left:0;top:0" width="1366" height="599" viewBox="0 0 1366 599">
  <g stroke="#cccccc" stroke-width="1" stroke-dasharray="2,2">
    <path d="M740,241.5 H1287 M740,289 H1287 M740,336.5 H1287 M740,384 H1287 M740,431.5 H1287"/>
  </g>
  <g font-size="12" fill="#666" text-anchor="end">
    <text x="738.5" y="246">1</text><text x="738.5" y="293.5">0.75</text><text x="738.5" y="341">0.5</text><text x="738.5" y="388.5">0.25</text><text x="738.5" y="436">0</text>
  </g>
  <g font-size="12" fill="#666">
    <text x="1292" y="246">320</text><text x="1292" y="293.5">240</text><text x="1292" y="341">160</text><text x="1292" y="388.5">80</text><text x="1292" y="436">0</text>
  </g>
  <polyline fill="none" stroke="#aad32a" stroke-width="3" stroke-linejoin="round" stroke-linecap="round" points="750,431.5 753.4,240 756.5,431.5 1249,431.5"/>
  <polyline fill="none" stroke="#14a898" stroke-width="3" stroke-linejoin="round" stroke-linecap="round" points="750,431.5 753.4,260 756.5,431.5 759.5,431.5 762.5,409.3 765.8,431.5 866.2,431.5 869.5,408.9 875.2,431.5 906.8,431.5 913.5,411.9 919.2,431.5 1222,431.5 1226.5,401.7 1229.6,431.5 1249,431.5"/>
  <g font-size="12.6" fill="#555">
<text x="0" y="0" text-anchor="end" transform="translate(757.00,442) rotate(-45)">2017-04-18 20:42:53</text>
<text x="0" y="0" text-anchor="end" transform="translate(794.52,442) rotate(-45)">2017-04-18 21:42:53</text>
<text x="0" y="0" text-anchor="end" transform="translate(832.04,442) rotate(-45)">2017-04-18 22:42:53</text>
<text x="0" y="0" text-anchor="end" transform="translate(869.56,442) rotate(-45)">2017-04-18 23:42:53</text>
<text x="0" y="0" text-anchor="end" transform="translate(907.08,442) rotate(-45)">2017-04-19 00:42:53</text>
<text x="0" y="0" text-anchor="end" transform="translate(944.60,442) rotate(-45)">2017-04-19 01:42:53</text>
<text x="0" y="0" text-anchor="end" transform="translate(982.12,442) rotate(-45)">2017-04-19 02:42:53</text>
<text x="0" y="0" text-anchor="end" transform="translate(1019.64,442) rotate(-45)">2017-04-19 03:42:53</text>
<text x="0" y="0" text-anchor="end" transform="translate(1057.16,442) rotate(-45)">2017-04-19 04:42:53</text>
<text x="0" y="0" text-anchor="end" transform="translate(1094.68,442) rotate(-45)">2017-04-19 05:42:53</text>
<text x="0" y="0" text-anchor="end" transform="translate(1132.20,442) rotate(-45)">2017-04-19 06:42:53</text>
<text x="0" y="0" text-anchor="end" transform="translate(1169.72,442) rotate(-45)">2017-04-19 07:42:53</text>
<text x="0" y="0" text-anchor="end" transform="translate(1207.24,442) rotate(-45)">2017-04-19 08:42:53</text>
<text x="0" y="0" text-anchor="end" transform="translate(1244.76,442) rotate(-45)">2017-04-19 09:42:53</text>
<text x="0" y="0" text-anchor="end" transform="translate(1282.28,442) rotate(-45)">2017-04-19 10:42:53</text>
  </g>
  <rect x="885" y="529" width="13" height="13" fill="#aad32a"/>
  <rect x="997" y="529" width="13" height="13" fill="#14a898"/>
</svg>
<div class="a" style="left:901px;top:530px;font-size:12px;color:#777">数据集市查询...</div>
<div class="a" style="left:1013px;top:530px;font-size:12px;color:#777">普通查询数量</div>

<!-- right scrollbar -->
<div class="b" style="left:1351px;top:338px;width:10px;height:261px;background:#d9d9d9"></div>
<div class="b" style="left:1351px;top:81px;width:10px;height:262px;background:#c1c1c1;border-radius:5px"></div>
</div></body></html>
